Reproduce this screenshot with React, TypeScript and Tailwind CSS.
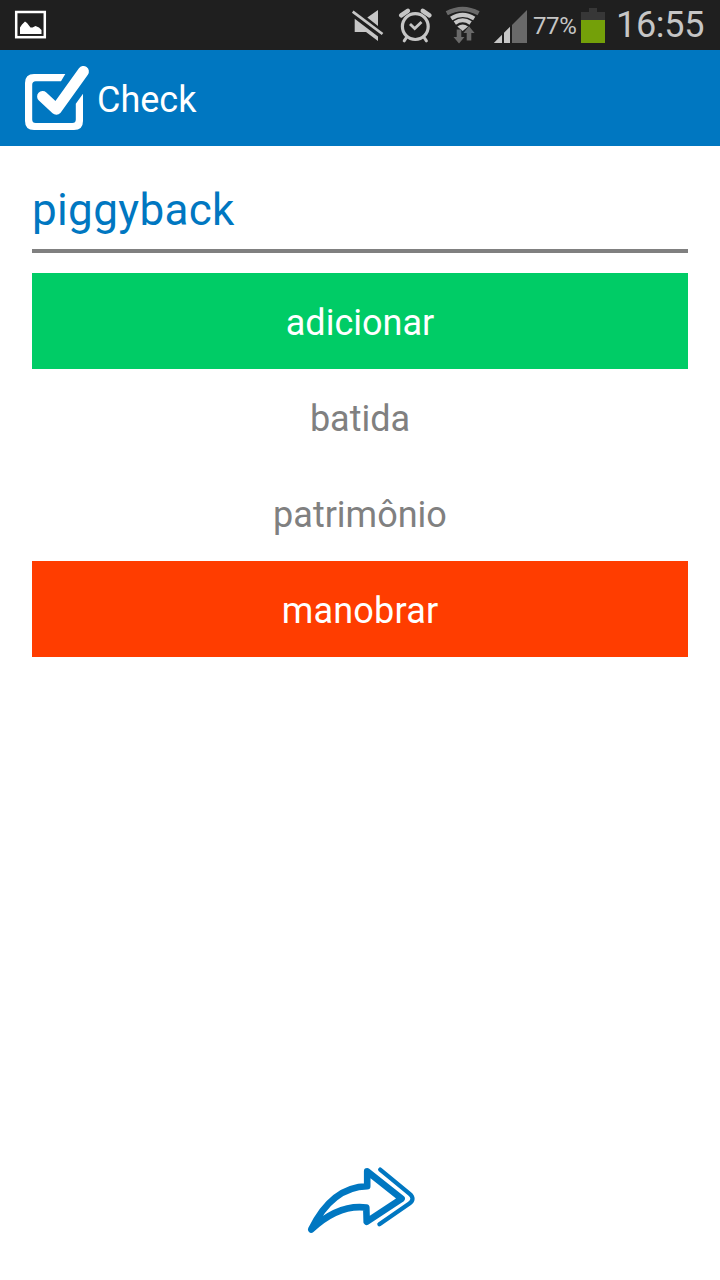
import type { ReactNode } from "react";

function StatusBar() {
  return (
    <div className="flex h-[50px] w-full shrink-0 items-start bg-[#1f1f1f] text-[#c6c6c6]">
      <svg className="ml-[14px] mr-auto h-[50px] w-[34px] shrink-0" viewBox="14 0 34 50">
        <rect x="16.2" y="12" width="28.6" height="25.2" fill="none" stroke="#fff" strokeWidth="2.5" />
        <path d="M20 34v-6.500l2-3 3-3 2 1.500 3.500 4.500h2l3-1.500 3.500 1.500 2.500 2.500v4z" fill="#fff" />
      </svg>
      <svg className="h-[50px] w-[45px] shrink-0" viewBox="345 0 45 50" fill="currentColor">
        <path d="M367.300 17.500 378 10v16zM354.700 18.700V32H366l12 9v-4.600z" />
        <path d="M352.700 11.700 382.500 34" fill="none" stroke="currentColor" strokeWidth="2.700" />
      </svg>
      <svg className="h-[50px] w-[50px] shrink-0" viewBox="390 0 50 50" fill="none" stroke="currentColor">
        <circle cx="415.300" cy="26.600" r="12.900" strokeWidth="3.200" />
        <path d="m401.200 15.300 6.600-4.400M429.400 15.300l-6.600-4.400" strokeWidth="4.600" strokeLinecap="round" />
        <path d="m404.200 40.800 2.600-3.800M426.400 40.800l-2.600-3.800" strokeWidth="3" strokeLinecap="round" />
        <path d="m410 24 4.700 4.500 6.800-6.500" strokeWidth="2.800" />
      </svg>
      <svg className="h-[50px] w-[50px] shrink-0" viewBox="440 0 50 50">
        <path d="M446.800 13.300Q462.600 4.800 478.600 13.300" fill="none" stroke="#696969" strokeWidth="4.400" />
        <g fill="none" stroke="#c6c6c6" strokeWidth="4">
          <path d="M451.200 18.500Q462.700 11.200 474.200 18.500" />
          <path d="M454.800 23Q462.700 17.500 470.600 23" />
        </g>
        <path d="M457.300 26.600Q462.700 22.300 468.100 26.600L462.700 31z" fill="#c6c6c6" />
        <path d="M456.700 29.400h4.600V37h3.200l-5.500 6.500-5.500-6.500h3.200zM466.700 40.500v-7.400h-3.300l5.600-6.800 5.600 6.800h-3.300v7.400z" fill="#696969" />
      </svg>
      <svg className="h-[50px] w-[43px] shrink-0" viewBox="490 0 43 50">
        <path d="M493.800 43 502 34.800V43zM504 43V32.700l6-6V43z" fill="#c6c6c6" />
        <path d="M512 43V25L527 10v33z" fill="#696969" />
      </svg>
      <span className="block w-[48px] whitespace-nowrap text-[24px] leading-[53px] tracking-[-0.4px]">77%</span>
      <svg className="h-[50px] w-[24px] shrink-0" viewBox="581 0 24 50">
        <path d="M589 8h8v4h8v8h-24v-8h8z" fill="#373737" />
        <path d="M581 20h24v23h-24z" fill="#74a009" />
      </svg>
      <span className="block w-[115px] whitespace-nowrap pl-[11px] text-[36px] leading-[50px] tracking-[-0.3px]">16:55</span>
    </div>
  );
}

function Header() {
  return (
    <header className="flex h-24 shrink-0 items-center bg-[#0077c1] text-white">
      <svg className="ml-6 h-[70px] w-[68px]" viewBox="24 63 68 70">
        <path
          d="M65.300 74H34q-9 0-9 9v38q0 9 9 9h40q9 0 9-9V93.700l-7.200 10V119.500q0 3.500-3.500 3.500H35.700q-3.500 0-3.500-3.500V84.700q0-3.500 3.500-3.500H61z"
          fill="currentColor"
        />
        <path d="M42.600 96.500 56.300 109.200 83.400 71.500" fill="none" stroke="currentColor" strokeWidth="11" strokeLinecap="round" strokeLinejoin="round" />
      </svg>
      <h1 className="pl-[5px] pt-1 text-[36px] leading-[48px]">Check</h1>
    </header>
  );
}

function Option({ tone, children }: { tone: string; children: ReactNode }) {
  return (
    <button className={`flex h-24 w-full items-center justify-center text-[36px] leading-[48px] ${tone}`}>
      <span className="block pt-1">{children}</span>
    </button>
  );
}

export default function App() {
  return (
    <div className="flex h-[1280px] w-[720px] flex-col bg-white font-['Roboto',sans-serif]">
      <StatusBar />
      <Header />
      <main className="flex flex-1 flex-col px-8">
        <h2 className="mb-5 h-[107px] border-b-4 border-[#808080] pt-[34px] text-[44px] leading-[60px] tracking-[0.35px] text-[#0077c1]">piggyback</h2>
        <Option tone="bg-[#00cc66] text-white">adicionar</Option>
        <Option tone="text-[#808080]">batida</Option>
        <Option tone="text-[#808080]">patrimônio</Option>
        <Option tone="bg-[#ff3d00] text-white tracking-[0.2px]">manobrar</Option>
        <button className="mt-auto flex justify-center pb-[40px]" aria-label="Próxima">
          <svg className="h-[80px] w-[120px]" viewBox="300 1160 120 80" fill="none" stroke="#0077c1" strokeLinecap="round" strokeLinejoin="round">
            <path d="M367.200 1171.300 401.600 1198.700 366.700 1221.800 366.300 1207.500Q338.500 1204 311.200 1229.500Q332 1187 367.200 1186.300z" strokeWidth="6.600" />
            <path d="M380.200 1169.600 409.400 1193.600Q415.600 1198.700 409.400 1203.500L379.400 1224.200" strokeWidth="4.300" />
          </svg>
        </button>
      </main>
    </div>
  );
}
